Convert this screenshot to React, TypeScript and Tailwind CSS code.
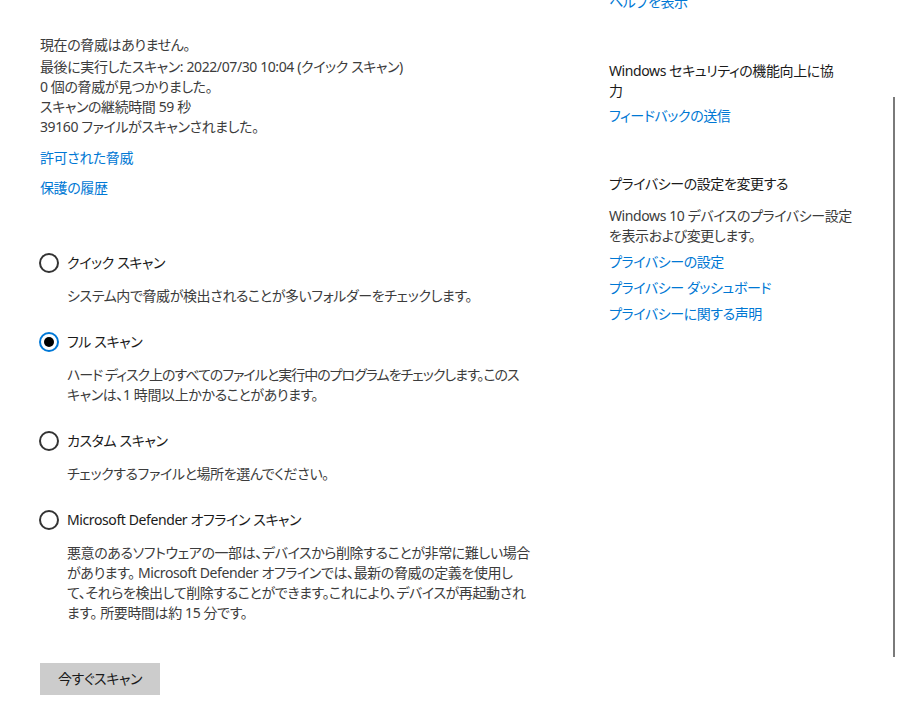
import React from 'react';

const base = "font-['Noto_Sans','Noto_Sans_CJK_JP',sans-serif] [font-feature-settings:'palt'] text-[14px] leading-5 tracking-[-0.4px] whitespace-nowrap";

const Radio: React.FC<{ checked?: boolean; label: string }> = ({ checked, label }) => (
  <div className="flex items-center h-5 -ml-px">
    {checked ? (
      <span className="w-5 h-5 rounded-full border-2 border-[#0078d7] flex items-center justify-center shrink-0">
        <span className="w-2.5 h-2.5 rounded-full bg-black" />
      </span>
    ) : (
      <span className="w-5 h-5 rounded-full border-2 border-[#333333] shrink-0" />
    )}
    <span className="ml-2 text-[#1a1a1a]">{label}</span>
  </div>
);

const Desc: React.FC<{ children: React.ReactNode }> = ({ children }) => (
  <p className="mt-[13px] pl-[27px] text-[#3c3c3c]">{children}</p>
);

const App: React.FC = () => {
  return (
    <div className={`relative h-[714px] w-[897px] overflow-hidden bg-white ${base}`}>
      <div className="flex">
        {/* Left: scan options */}
        <div className="w-[609px] shrink-0 pl-[40px] pt-[35px]">
          <p className="text-[#3c3c3c]">現在の脅威はありません。</p>
          <div className="mt-[2px] text-[#3c3c3c]">
            <p>最後に実行したスキャン: 2022/07/30 10:04 (クイック スキャン)</p>
            <p>0 個の脅威が見つかりました。</p>
            <p>スキャンの継続時間 59 秒</p>
            <p>39160 ファイルがスキャンされました。</p>
          </div>
          <a className="mt-[11px] block text-[#0078d4]">許可された脅威</a>
          <a className="mt-[10px] block text-[#0078d4]">保護の履歴</a>

          <div className="mt-[55px]">
            <Radio label="クイック スキャン" />
            <Desc>システム内で脅威が検出されることが多いフォルダーをチェックします。</Desc>
          </div>
          <div className="mt-[26px]">
            <Radio checked label="フル スキャン" />
            <Desc>
              <span className="tracking-[-1px]">
                ハード ディスク上のすべてのファイルと実行中のプログラムをチェックします。このス
              </span>
              <br />
              キャンは、1 時間以上かかることがあります。
            </Desc>
          </div>
          <div className="mt-[26px]">
            <Radio label="カスタム スキャン" />
            <Desc>チェックするファイルと場所を選んでください。</Desc>
          </div>
          <div className="mt-[26px]">
            <Radio label="Microsoft Defender オフライン スキャン" />
            <Desc>
              悪意のあるソフトウェアの一部は、デバイスから削除することが非常に難しい場合
              <br />
              があります。 Microsoft Defender オフラインでは、最新の脅威の定義を使用し
              <br />
              て、それらを検出して削除することができます。これにより、デバイスが再起動され
              <br />
              ます。 所要時間は約 15 分です。
            </Desc>
          </div>

          <button className="mt-[40px] flex h-8 w-[120px] items-center justify-center bg-[#cccccc] text-[#1a1a1a]">
            今すぐスキャン
          </button>
        </div>

        {/* Right: related links */}
        <div className="w-[260px] -mt-[8px]">
          <a className="block text-[#0078d4]">ヘルプを表示</a>

          <p className="mt-[49px] text-[#1a1a1a]">
            Windows セキュリティの機能向上に協
            <br />
            力
          </p>
          <a className="mt-[5px] block text-[#0078d4]">フィードバックの送信</a>

          <p className="mt-[48px] text-[#1a1a1a]">プライバシーの設定を変更する</p>
          <p className="mt-[12px] text-[#3c3c3c]">
            Windows 10 デバイスのプライバシー設定
            <br />
            を表示および変更します。
          </p>
          <a className="mt-[6px] block text-[#0078d4]">プライバシーの設定</a>
          <a className="mt-[6px] block text-[#0078d4]">プライバシー ダッシュボード</a>
          <a className="mt-[6px] block text-[#0078d4]">プライバシーに関する声明</a>
        </div>
      </div>

      {/* scrollbar thumb */}
      <div className="absolute left-[893px] top-[97px] h-[560px] w-[2px] bg-[#7a7a7a]" />
    </div>
  );
};

export default App;
